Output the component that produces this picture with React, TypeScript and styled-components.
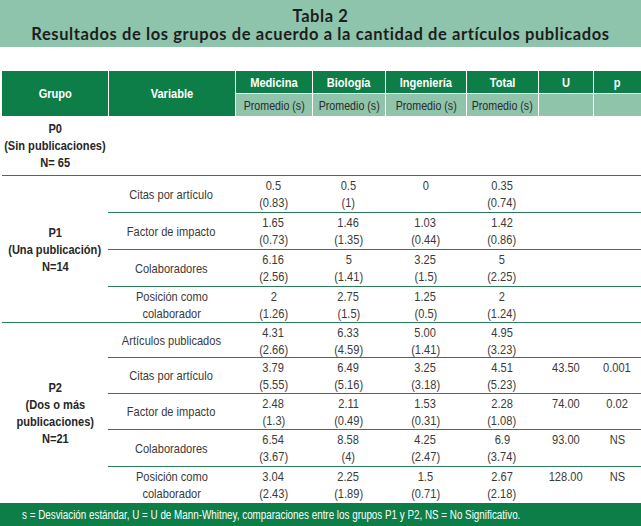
import React from "react";
import styled, { createGlobalStyle } from "styled-components";

const Global = createGlobalStyle`
  html, body { margin: 0; padding: 0; background: #ffffff; }
  body { width: 641px; height: 526px; overflow: hidden; }
`;

const ARIAL = `"Liberation Sans", Arial, sans-serif`;
const LINE = "#2a7c58";

const Page = styled.div`
  width: 641px;
  height: 526px;
  display: flex;
  flex-direction: column;
  background: #ffffff;
`;

const TitleBand = styled.header`
  height: 47px;
  box-sizing: border-box;
  padding-top: 3px;
  background: #8ec4ac;
  display: flex;
  flex-direction: column;
  align-items: center;
  justify-content: center;
  font-family: "Lato", "Open Sans", sans-serif;
  font-weight: 700;
  color: #1d1d1d;
  line-height: 18px;
`;

const TitleLine = styled.div<{ $size: number; $spacing: number }>`
  font-size: ${(p) => p.$size}px;
  letter-spacing: ${(p) => p.$spacing}px;
  white-space: nowrap;
`;

const Gap = styled.div`
  height: 24px;
`;

/* Arial Narrow look: Arial metrics compressed horizontally */
const Txt = styled.span<{ $origin?: string }>`
  display: inline-block;
  white-space: nowrap;
  transform: scaleX(0.82);
  transform-origin: ${(p) => p.$origin || "center"};
`;

const Grid = styled.div`
  display: grid;
  margin-left: 2px;
  grid-template-columns: 106px 127px 77px 73px 81px 72px 55px 48px;
  grid-template-rows: 22px 23px 59px 37px 37px 37px 36px 35px 36px 36px 37px 37px;
  font-family: ${ARIAL};
`;

const HeadCell = styled.div<{ $col: number; $rows?: number; $first?: boolean }>`
  grid-column: ${(p) => p.$col};
  grid-row: ${(p) => (p.$rows ? `1 / span ${p.$rows}` : "1")};
  background: #0d7e47;
  color: #ffffff;
  font-weight: 700;
  font-size: 13.5px;
  display: flex;
  align-items: center;
  justify-content: center;
  border-left: ${(p) => (p.$first ? "none" : "1px solid #ffffff")};
  box-sizing: border-box;
`;

const SubHeadCell = styled.div<{ $col: number }>`
  grid-column: ${(p) => p.$col};
  grid-row: 2;
  background: #8fc4aa;
  color: #2a2a2a;
  font-size: 13px;
  display: flex;
  align-items: center;
  justify-content: center;
  border-left: 1px solid #ffffff;
  border-top: 1px solid #ffffff;
  box-sizing: border-box;
`;

const GroupCell = styled.div<{ $row: number; $span: number; $line: boolean }>`
  grid-column: 1;
  grid-row: ${(p) => `${p.$row} / span ${p.$span}`};
  border-top: ${(p) => (p.$line ? `1px solid ${LINE}` : "none")};
  box-sizing: border-box;
  display: flex;
  flex-direction: column;
  align-items: center;
  justify-content: center;
  font-weight: 700;
  font-size: 13.5px;
  line-height: 17px;
  color: #262626;
  text-align: center;
`;

const EmptyBand = styled.div<{ $row: number }>`
  grid-column: 2 / span 7;
  grid-row: ${(p) => p.$row};
`;

const VarCell = styled.div<{ $row: number; $line: boolean }>`
  grid-column: 2;
  grid-row: ${(p) => p.$row};
  border-top: ${(p) => (p.$line ? `1px solid ${LINE}` : "none")};
  box-sizing: border-box;
  display: flex;
  flex-direction: column;
  align-items: center;
  justify-content: center;
  text-align: center;
  font-size: 13.5px;
  line-height: 17px;
  color: #3a3a3a;
`;

const ValCell = styled.div<{ $row: number; $col: number; $line: boolean }>`
  grid-column: ${(p) => p.$col};
  grid-row: ${(p) => p.$row};
  border-top: ${(p) => (p.$line ? `1px solid ${LINE}` : "none")};
  box-sizing: border-box;
  display: flex;
  flex-direction: column;
  align-items: center;
  justify-content: flex-start;
  padding-top: 1px;
  font-size: 13.5px;
  line-height: 17px;
  color: #3a3a3a;
`;

const Footer = styled.footer`
  height: 23px;
  background: #0d7e47;
  color: #ffffff;
  font-family: ${ARIAL};
  font-size: 12px;
  display: flex;
  align-items: center;
  padding-left: 22px;
`;

type Row = {
  variable: string[];
  vals: [string, string][];
  u?: string;
  p?: string;
};

type Group = {
  label: string[];
  rows: Row[];
};

const groups: Group[] = [
  {
    label: ["P1", "(Una publicación)", "N=14"],
    rows: [
      { variable: ["Citas por artículo"], vals: [["0.5", "(0.83)"], ["0.5", "(1)"], ["0", ""], ["0.35", "(0.74)"]] },
      { variable: ["Factor de impacto"], vals: [["1.65", "(0.73)"], ["1.46", "(1.35)"], ["1.03", "(0.44)"], ["1.42", "(0.86)"]] },
      { variable: ["Colaboradores"], vals: [["6.16", "(2.56)"], ["5", "(1.41)"], ["3.25", "(1.5)"], ["5", "(2.25)"]] },
      { variable: ["Posición como", "colaborador"], vals: [["2", "(1.26)"], ["2.75", "(1.5)"], ["1.25", "(0.5)"], ["2", "(1.24)"]] },
    ],
  },
  {
    label: ["P2", "(Dos o más", "publicaciones)", "N=21"],
    rows: [
      { variable: ["Artículos publicados"], vals: [["4.31", "(2.66)"], ["6.33", "(4.59)"], ["5.00", "(1.41)"], ["4.95", "(3.23)"]] },
      { variable: ["Citas por artículo"], vals: [["3.79", "(5.55)"], ["6.49", "(5.16)"], ["3.25", "(3.18)"], ["4.51", "(5.23)"]], u: "43.50", p: "0.001" },
      { variable: ["Factor de impacto"], vals: [["2.48", "(1.3)"], ["2.11", "(0.49)"], ["1.53", "(0.31)"], ["2.28", "(1.08)"]], u: "74.00", p: "0.02" },
      { variable: ["Colaboradores"], vals: [["6.54", "(3.67)"], ["8.58", "(4)"], ["4.25", "(2.47)"], ["6.9", "(3.74)"]], u: "93.00", p: "NS" },
      { variable: ["Posición como", "colaborador"], vals: [["3.04", "(2.43)"], ["2.25", "(1.89)"], ["1.5", "(0.71)"], ["2.67", "(2.18)"]], u: "128.00", p: "NS" },
    ],
  },
];

const heads = ["Medicina", "Biología", "Ingeniería", "Total", "U", "p"];

const Line = ({ text }: { text: string }) => <Txt>{text || "\u00a0"}</Txt>;

export default function App() {
  let rowIndex = 4;
  const body: React.ReactNode[] = [];
  groups.forEach((g, gi) => {
    const start = rowIndex;
    body.push(
      <GroupCell key={`g${gi}`} $row={start} $span={g.rows.length} $line>
        {g.label.map((l, i) => (
          <Line key={i} text={l} />
        ))}
      </GroupCell>
    );
    g.rows.forEach((r, ri) => {
      const row = rowIndex++;
      body.push(
        <VarCell key={`v${gi}-${ri}`} $row={row} $line>
          {r.variable.map((l, i) => (
            <Line key={i} text={l} />
          ))}
        </VarCell>
      );
      r.vals.forEach((v, vi) => {
        body.push(
          <ValCell key={`c${gi}-${ri}-${vi}`} $row={row} $col={3 + vi} $line>
            <Line text={v[0]} />
            <Line text={v[1]} />
          </ValCell>
        );
      });
      body.push(
        <ValCell key={`u${gi}-${ri}`} $row={row} $col={7} $line>
          <Line text={r.u || ""} />
        </ValCell>
      );
      body.push(
        <ValCell key={`p${gi}-${ri}`} $row={row} $col={8} $line>
          <Line text={r.p || ""} />
        </ValCell>
      );
    });
  });

  return (
    <>
      <Global />
      <Page>
        <TitleBand>
          <TitleLine $size={16.5} $spacing={0.6}>Tabla 2</TitleLine>
          <TitleLine $size={16.5} $spacing={0.6}>Resultados de los grupos de acuerdo a la cantidad de artículos publicados</TitleLine>
        </TitleBand>
        <Gap />
        <Grid>
          <HeadCell $col={1} $rows={2} $first><Txt>Grupo</Txt></HeadCell>
          <HeadCell $col={2} $rows={2}><Txt>Variable</Txt></HeadCell>
          {heads.map((h, i) => (
            <HeadCell key={h} $col={3 + i}><Txt>{h}</Txt></HeadCell>
          ))}
          {[3, 4, 5, 6].map((c) => (
            <SubHeadCell key={c} $col={c}><Txt>Promedio (s)</Txt></SubHeadCell>
          ))}
          <SubHeadCell $col={7} />
          <SubHeadCell $col={8} />
          <GroupCell $row={3} $span={1} $line={false}>
            <Line text="P0" />
            <Line text="(Sin publicaciones)" />
            <Line text="N= 65" />
          </GroupCell>
          <EmptyBand $row={3} />
          {body}
        </Grid>
        <Footer>
          <Txt $origin="left">
            s = Desviación estándar, U = U de Mann-Whitney, comparaciones entre los grupos P1 y P2, NS = No Significativo.
          </Txt>
        </Footer>
      </Page>
    </>
  );
}
